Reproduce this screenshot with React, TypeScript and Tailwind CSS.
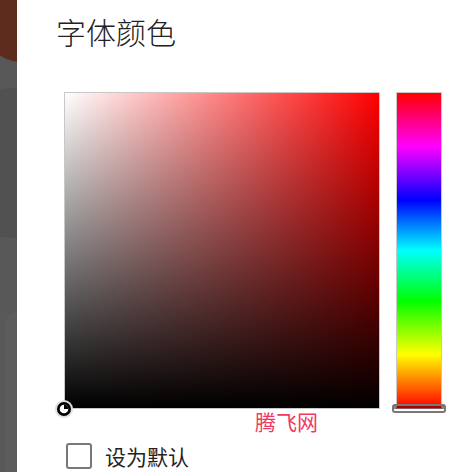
import React from "react";

const cjk = { fontFamily: '"Noto Sans CJK SC", "Noto Sans", sans-serif' };

function SideStrip() {
  return (
    <div className="relative w-[17px] shrink-0 overflow-hidden bg-[#585858]">
      <span className="absolute left-[-18px] top-[-18px] h-[80px] w-[80px] rounded-full bg-[#5e2c1d]" />
      <span className="absolute left-[-60px] top-[88px] h-[150px] w-[150px] rounded-full bg-[#515151]" />
      <span className="absolute left-[5px] top-[312px] h-[200px] w-[40px] rounded-tl-[12px] bg-[#5c5c5c]" />
    </div>
  );
}

function SatValSquare() {
  return (
    <div className="relative h-[317px] w-[316px] shrink-0">
      <div className="h-full w-full border border-[#c8c8c8] bg-[#ff0000]">
        <div className="h-full w-full bg-gradient-to-r from-white to-transparent">
          <div className="h-full w-full bg-gradient-to-b from-transparent to-black" />
        </div>
      </div>
      {/* picker handle */}
      <div className="absolute bottom-[-9px] left-[-9px] flex h-[18px] w-[18px] items-center justify-center rounded-full bg-[#dedede]">
        <svg width="14" height="14" viewBox="0 0 14 14">
          <circle cx="7" cy="7" r="7" fill="#000" />
          <circle cx="7" cy="7" r="4.3" fill="#fff" />
          <path d="M7 7 L7 2.7 A4.3 4.3 0 0 1 11.3 7 Z" fill="#000" />
        </svg>
      </div>
    </div>
  );
}

function HueBar() {
  return (
    <div className="relative h-[317px] w-[46px] shrink-0">
      <div className="h-full w-full border border-[#c8c8c8] bg-[linear-gradient(to_bottom,#ff0000_0%,#ff00ff_17%,#0000ff_34%,#00ffff_50%,#00ff00_66%,#ffff00_83%,#ff0000_100%)]" />
      <div className="absolute bottom-[-4px] left-[-4px] h-[9px] w-[54px] rounded-[3px] border-[2.5px] border-[#777] bg-[linear-gradient(to_bottom,rgba(90,0,0,0.55)_0%,rgba(90,0,0,0.55)_55%,transparent_55%)]" />
    </div>
  );
}

export default function App() {
  return (
    <div className="flex h-[472px] w-[474px] overflow-hidden" style={cjk}>
      <SideStrip />
      <div className="relative flex flex-1 flex-col bg-white">
        <h1 className="ml-[39px] mt-[12px] text-[30px] leading-[38px] font-light text-[#222]">
          字体颜色
        </h1>
        <div className="ml-[47px] mt-[42px] flex gap-[16px]">
          <SatValSquare />
          <HueBar />
        </div>
        <span className="absolute left-[238px] top-[406px] text-[21px] leading-[30px] text-[#f03a64]">
          腾飞网
        </span>
        <label className="ml-[49px] mt-[34px] flex items-center gap-[13px]">
          <span className="h-[26px] w-[26px] rounded-[3px] border-[2.5px] border-[#777]" />
          <span className="text-[21px] leading-[26px] text-[#222]">设为默认</span>
        </label>
      </div>
    </div>
  );
}
